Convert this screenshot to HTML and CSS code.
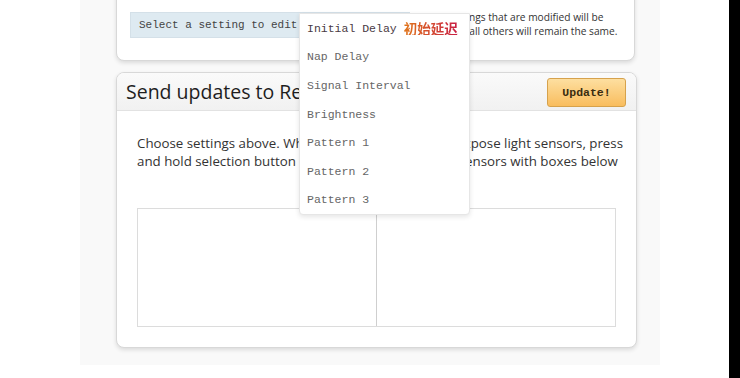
FILE: index.html
```html
<!DOCTYPE html>
<html>
<head>
<meta charset="utf-8">
<link rel="stylesheet" href="styles.css">
</head>
<body>
<div class="page">
  <div class="column">
    <div class="card card-top">
      <div class="setting-row">
        <div class="select-field">Select a setting to edit</div>
        <p class="note">Only settings that are modified will be<br>updated, all others will remain the same.</p>
      </div>
    </div>
    <div class="card card-send">
      <div class="card-head">
        <h2 class="title">Send updates to Remote</h2>
        <button class="update-btn">Update!</button>
      </div>
      <div class="card-body">
        <p class="instructions">Choose settings above. When ready, aim remote to expose light sensors, press<br>and hold selection button for 3 seconds, then cover sensors with boxes below</p>
        <div class="sensor-boxes">
          <div class="sensor-box"></div>
          <div class="sensor-box"></div>
        </div>
      </div>
    </div>
    <ul class="dropdown">
      <li class="item item-first">Initial Delay <span class="cn">初始延迟</span></li>
      <li class="item">Nap Delay</li>
      <li class="item">Signal Interval</li>
      <li class="item">Brightness</li>
      <li class="item">Pattern 1</li>
      <li class="item">Pattern 2</li>
      <li class="item">Pattern 3</li>
    </ul>
  </div>
</div>
<div class="scrollbar"></div>
</body>
</html>
```
FILE: styles.css
```css
html, body {
  margin: 0;
  padding: 0;
}
body {
  display: flex;
  height: 378px;
  overflow: hidden;
  background: #ffffff;
  font-family: "Open Sans", "Liberation Sans", sans-serif;
}
.page {
  flex: 1;
}
.scrollbar {
  width: 11px;
  background: #000;
}
.column {
  display: flow-root;
  position: relative;
  margin-left: 80px;
  width: 544px;
  height: 365px;
  padding-left: 36px;
  background: #f9f9f9;
}
.card {
  width: 519px;
  background: #fff;
  border: 1px solid #d8d8d8;
  border-radius: 8px;
  box-shadow: 0 2px 4px rgba(0,0,0,0.12);
}
.card-top {
  margin-top: -20px;
  padding: 31px 13px 21px;
  box-sizing: border-box;
  height: 81px;
}
.setting-row {
  display: flex;
  align-items: center;
  gap: 14px;
}
.select-field {
  width: 280px;
  height: 26px;
  box-sizing: border-box;
  padding-left: 8px;
  background: #deeaf1;
  border: 1px solid #d4e0e8;
  font-family: "Liberation Mono", monospace;
  font-size: 11px;
  line-height: 24px;
  color: #444;
  white-space: nowrap;
  overflow: hidden;
}
.note {
  margin: -3px 0 0 0;
  font-size: 10.2px;
  line-height: 14px;
  color: #333;
  white-space: nowrap;
}
.card-send {
  margin-top: 11px;
  overflow: hidden;
}
.card-head {
  display: flex;
  align-items: center;
  justify-content: space-between;
  height: 37px;
  padding: 0 10px 0 9px;
  background: linear-gradient(#fafafa, #f1f1f1);
  border-bottom: 1px solid #e2e2e2;
}
.title {
  margin: 0;
  font-weight: normal;
  font-size: 19.5px;
  color: #1e1e1e;
  white-space: nowrap;
}
.update-btn {
  width: 79px;
  height: 29px;
  margin-top: 2px;
  padding: 0;
  border: 1px solid #d6a24c;
  border-radius: 3px;
  background: linear-gradient(#fddfa0, #f9bd5e);
  font-family: "Liberation Mono", monospace;
  font-weight: bold;
  font-size: 11.5px;
  color: #3a2c10;
}
.card-body {
  padding: 23px 21px 20px 20px;
}
.instructions {
  margin: 0;
  font-size: 13.3px;
  line-height: 18px;
  color: #333;
  white-space: nowrap;
}
.sensor-boxes {
  display: flex;
  margin-top: 38px;
  width: 479px;
  height: 119px;
  box-sizing: border-box;
  border: 1px solid #dcdcdc;
}
.sensor-box {
  flex: 1;
}
.sensor-box + .sensor-box {
  border-left: 1px solid #cfcfcf;
}
.dropdown {
  position: absolute;
  left: 219px;
  top: 13px;
  width: 171px;
  margin: 0;
  padding: 0;
  list-style: none;
  background: #fff;
  border: 1px solid #e6e6e6;
  border-radius: 0 0 4px 4px;
  box-shadow: 0 2px 5px rgba(0,0,0,0.1);
  box-sizing: border-box;
}
.item {
  display: flex;
  align-items: center;
  gap: 7px;
  height: 28.6px;
  padding-left: 7px;
  font-family: "Liberation Mono", monospace;
  font-size: 11.5px;
  color: #666;
  white-space: nowrap;
}
.item-first {
  color: #4a3a44;
}
.cn {
  font-family: "Noto Sans CJK SC", sans-serif;
  font-weight: bold;
  font-size: 13.5px;
  line-height: 1;
  background: linear-gradient(90deg, #e0761c, #c81e44);
  -webkit-background-clip: text;
  background-clip: text;
  color: transparent;
}
```
